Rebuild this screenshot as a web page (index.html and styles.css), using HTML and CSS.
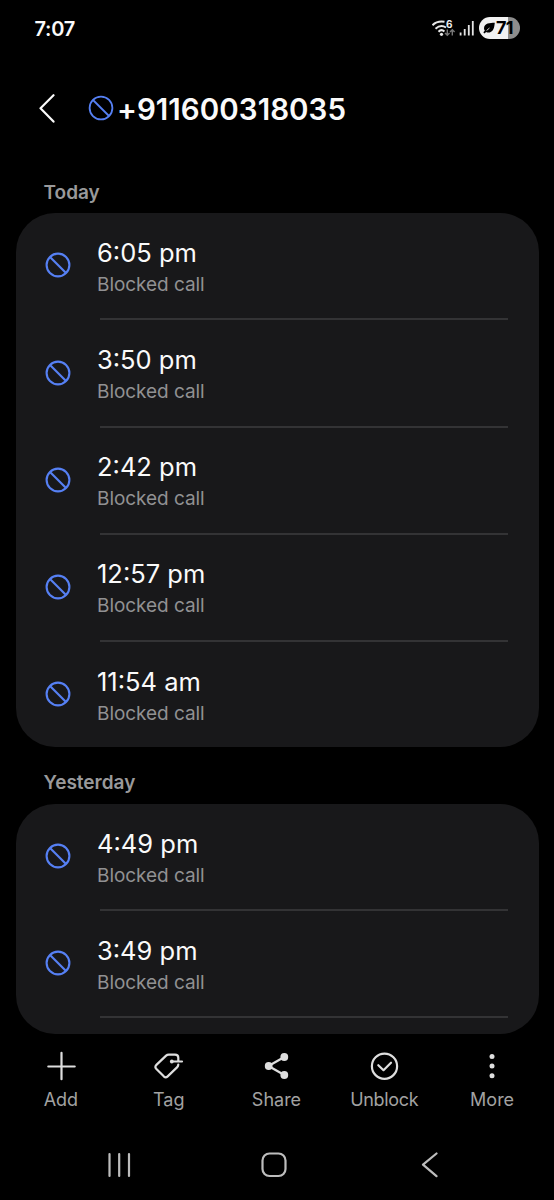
FILE: index.html
```html
<!DOCTYPE html>
<html lang="en">
<head>
<meta charset="utf-8">
<title>Call history</title>
<link rel="stylesheet" href="styles.css">
</head>
<body>
<svg class="defs" aria-hidden="true">
  <symbol id="block" viewBox="0 0 26 26"><circle cx="13" cy="13" r="11.4"/><path d="M5 5l16 16"/></symbol>
</svg>
<div class="screen">
  <div class="status">
    <span class="clock">7:07</span>
    <div class="status-icons">
      <svg class="wifi" viewBox="0 0 24 20">
        <g fill="none" stroke="#e8e8e8" stroke-width="2">
          <path d="M.5 7.200C3.500 4.200 7.300 3 12.500 3.800"/><path d="M3.500 10.700C6.600 8 10.400 7.200 14 9.500"/><path d="M6.500 13.800C8.300 11.900 10.700 11.900 12.400 13.500"/>
        </g>
        <circle cx="9.500" cy="16.300" r="1.600" fill="#e8e8e8"/>
        <text x="14" y="9.800" class="wifi-gen">6</text>
        <g fill="none" stroke="#777" stroke-width="1.400"><path d="M15.300 11.500v5.500M13 15l2.300 2.300 2.300-2.300M20.300 17.500V12M18 14l2.300-2.300 2.300 2.300"/></g>
      </svg>
      <svg class="signal" viewBox="0 0 15 16"><path d="M1.600 12.500V15.500M5.700 9V15.500M9.800 5V15.500M13.800 1V15.500" stroke="#e4e4e4" stroke-width="1.800"/></svg>
      <div class="battery">
        <svg class="leaf" viewBox="0 0 12 12"><path d="M11.800.8C7 .8 1.200 1.200 1 6.300c0 1 .3 1.800.8 2.500L.3 10.300l1.200 1.200 1.600-1.600c1 .6 2.300.8 3.600.5C10.800 9.500 11.300 5 11.800.800z" fill="#000"/><path d="M3.600 8.500L6.500 6" fill="none" stroke="#f2f2f2" stroke-width=".9"/></svg>
        <span>71</span>
      </div>
    </div>
  </div>
  <header class="header">
    <svg class="back" viewBox="0 0 16 29"><path d="M14.500 1.200L1.500 14.300l13 13.300"/></svg>
    <svg class="block block-title"><use href="#block"/></svg>
    <h1>+911600318035</h1>
  </header>
  <main class="list">
    <h2 class="today">Today</h2>
    <section class="card">
      <div class="row"><svg class="block"><use href="#block"/></svg><div class="call"><div class="time">6:05 pm</div><div class="kind">Blocked call</div></div></div>
      <div class="row"><svg class="block"><use href="#block"/></svg><div class="call"><div class="time">3:50 pm</div><div class="kind">Blocked call</div></div></div>
      <div class="row"><svg class="block"><use href="#block"/></svg><div class="call"><div class="time">2:42 pm</div><div class="kind">Blocked call</div></div></div>
      <div class="row"><svg class="block"><use href="#block"/></svg><div class="call"><div class="time">12:57 pm</div><div class="kind">Blocked call</div></div></div>
      <div class="row last"><svg class="block"><use href="#block"/></svg><div class="call"><div class="time">11:54 am</div><div class="kind">Blocked call</div></div></div>
    </section>
    <h2 class="yesterday">Yesterday</h2>
    <section class="card card-cut">
      <div class="row"><svg class="block"><use href="#block"/></svg><div class="call"><div class="time">4:49 pm</div><div class="kind">Blocked call</div></div></div>
      <div class="row"><svg class="block"><use href="#block"/></svg><div class="call"><div class="time">3:49 pm</div><div class="kind">Blocked call</div></div></div>
    </section>
  </main>
  <nav class="actions">
    <div class="action"><svg viewBox="0 0 32 32"><path d="M16.500 2.800v26.400M3.300 16.500h26.400"/></svg><span>Add</span></div>
    <div class="action"><svg viewBox="0 0 32 32"><path d="M25.300 11V7.800Q25.300 4.600 22 4.600H15.800Q14.200 4.600 13.100 5.600L3.400 14.900Q1.500 16.800 3.200 18.700L11 26.600Q12.700 28.200 14.400 26.600L24 17.400Q25.300 16 25.300 14.500M19 11.500H29"/><circle cx="18.800" cy="11.500" r="1.900" class="solid"/></svg><span>Tag</span></div>
    <div class="action"><svg viewBox="0 0 32 32"><path d="M24.300 7L8.500 16l15.800 9"/><circle cx="24.300" cy="7" r="3.900" class="solid"/><circle cx="8.700" cy="16" r="3.900" class="solid"/><circle cx="24.300" cy="25" r="3.900" class="solid"/></svg><span>Share</span></div>
    <div class="action"><svg viewBox="0 0 32 32"><circle cx="16.500" cy="16.200" r="12.600"/><path d="M10.300 15.200l5.200 5L23 12.700"/></svg><span class="unblock">Unblock</span></div>
    <div class="action"><svg viewBox="0 0 32 32"><g class="solid"><circle cx="16" cy="6.500" r="2.500"/><circle cx="16" cy="16" r="2.500"/><circle cx="16" cy="25.700" r="2.500"/></g></svg><span>More</span></div>
  </nav>
  <div class="system">
    <svg class="recents" viewBox="0 0 24 26"><path d="M2.500 2v22M12.200 2v22M22 2v22"/></svg>
    <svg class="home" viewBox="0 0 26 26"><rect x="1.500" y="1.500" width="23" height="22.500" rx="7"/></svg>
    <svg class="nav-back" viewBox="0 0 17 26"><path d="M15.500 1.500L2 12.700l13.500 11.500"/></svg>
  </div>
</div>
</body>
</html>
```
FILE: styles.css
```css
* { box-sizing: border-box; }
body { margin: 0; background: #000; color: #fafafa; font-family: Inter, "Open Sans", sans-serif; }
h1, h2 { margin: 0; white-space: nowrap; }
svg { display: block; flex: none; }
.defs { display: none; }
.screen { width: 554px; height: 1200px; overflow: hidden; display: flex; flex-direction: column; }
.status { height: 56px; padding: 0 34px 0 34.500px; display: flex; align-items: center; justify-content: space-between; flex: none; }
.clock { font-size: 20px; font-weight: 600; line-height: 24px; letter-spacing: -0.300px; padding-top: 1px; }
.status-icons { display: flex; align-items: center; }
.wifi { width: 24px; height: 20px; }
.wifi-gen { font-size: 10px; font-weight: 700; fill: #eee; }
.signal { width: 15px; height: 16px; margin: 0 5px 0 3px; }
.battery { width: 41px; height: 22px; border-radius: 11px; background: linear-gradient(90deg, #f2f2f2 0 71%, #8d8d8d 71%); display: flex; align-items: center; padding-left: 4px; color: #000; font-size: 18px; line-height: 22px; font-weight: 700; letter-spacing: -0.800px; }
.leaf { width: 12px; height: 12px; margin-right: 1px; }
.header { height: 104px; padding-left: 39px; display: flex; align-items: center; flex: none; }
.back { width: 16px; height: 29px; margin-right: 33px; }
.back path { fill: none; stroke: #fafafa; stroke-width: 2.200; stroke-linecap: round; stroke-linejoin: round; }
.block { width: 26px; height: 26px; fill: none; stroke: #5680f4; stroke-width: 2.100; }
.block-title { stroke-width: 1.800; margin-right: 3px; }
h1 { font-size: 29.500px; font-weight: 600; line-height: 36px; padding-top: 2px; letter-spacing: 0.050px; }
.list { height: 874px; padding: 0 15.500px; flex: none; overflow: hidden; }
h2 { font-size: 19px; font-weight: 600; line-height: 24px; padding-left: 28px; color: #99999b; }
.today { margin: 21px 0 8.300px; }
.yesterday { margin: 23.400px 0 9.200px; }
.card { height: 534px; border-radius: 39px; background: #18181a; overflow: hidden; }
.card-cut { height: 230px; }
.row { height: 107.150px; display: flex; padding-left: 29.500px; }
.row .block { margin-top: 39.200px; }
.call { flex: 1; margin-left: 29px; margin-right: 31px; border-bottom: 2px solid #333335; padding-top: 23.700px; }
.last .call { border-bottom: 0; }
.time, .kind { margin-left: -3px; white-space: nowrap; }
.time { font-size: 25.500px; line-height: 32px; }
.kind { font-size: 19px; line-height: 24px; margin-top: 4px; color: #919193; letter-spacing: -0.050px; }
.actions { height: 94px; padding: 16px 8px 0 7px; display: grid; grid-template-columns: repeat(5, 1fr); flex: none; }
.action { display: flex; flex-direction: column; align-items: center; font-size: 18px; line-height: 24px; color: #a2a2a2; }
.action svg { width: 32px; height: 32px; margin-bottom: 6px; fill: none; stroke: #dedede; stroke-width: 2.200; stroke-linecap: round; stroke-linejoin: round; }
.action .solid { fill: #dedede; stroke: none; }
.unblock { letter-spacing: -0.300px; }
.system { height: 72px; padding: 24px 115px 0 107px; display: flex; flex: none; }
.system svg { fill: none; stroke: #bdbdbd; stroke-width: 2.200; stroke-linecap: round; stroke-linejoin: round; height: 26px; }
.recents { width: 24px; }
.home { width: 26px; margin: 0 134px 0 130px; }
.nav-back { width: 17px; }
```
